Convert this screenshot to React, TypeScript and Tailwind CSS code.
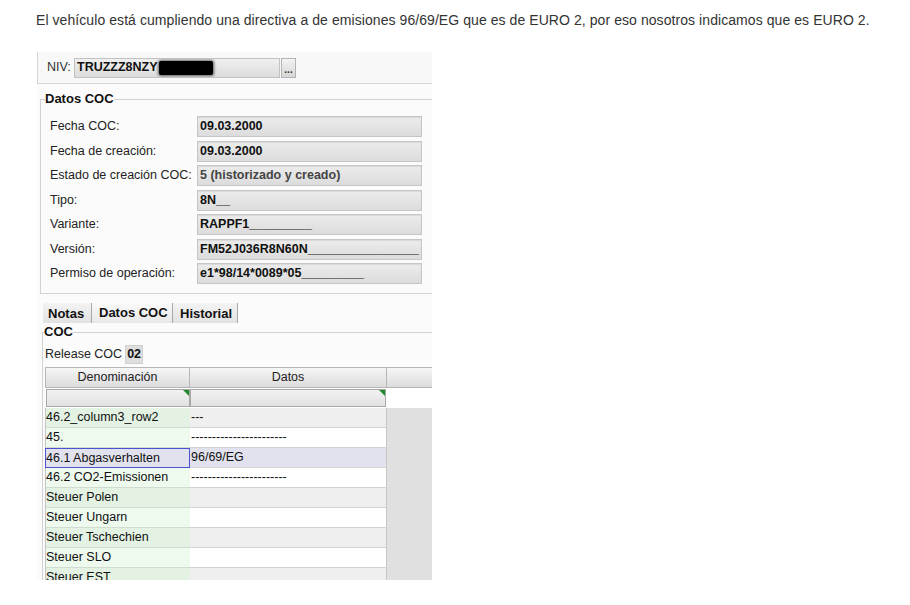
const fields: [string, string, boolean?][] = [
  ['Fecha COC:', '09.03.2000'],
  ['Fecha de creación:', '09.03.2000'],
  ['Estado de creación COC:', '5 (historizado y creado)', true],
  ['Tipo:', '8N__'],
  ['Variante:', 'RAPPF1_________'],
  ['Versión:', 'FM52J036R8N60N________________'],
  ['Permiso de operación:', 'e1*98/14*0089*05_________'],
]

const rows: [string, string][] = [
  ['46.2_column3_row2', '---'],
  ['45.', '-----------------------'],
  ['46.1 Abgasverhalten', '96/69/EG'],
  ['46.2 CO2-Emissionen', '-----------------------'],
  ['Steuer Polen', ''],
  ['Steuer Ungarn', ''],
  ['Steuer Tschechien', ''],
  ['Steuer SLO', ''],
  ['Steuer EST', ''],
]

function FilterBox() {
  return (
    <div className="relative h-full border border-[#a8a8a8] bg-linear-to-b from-[#f2f2f2] to-[#e2e2e2]">
      <span className="absolute right-0 top-0 w-0 h-0 border-l-[6px] border-l-transparent border-t-[6px] border-t-[#1f8a2c]" />
    </div>
  )
}

export default function App() {
  return (
    <div className="w-[910px] h-[605px] bg-white overflow-hidden font-['Liberation_Sans',Arial,sans-serif]">
      {/* Intro sentence */}
      <p className="pt-[12px] pl-[36px] text-[14px] leading-[16px] tracking-[0.07px] text-[#333]">
        El vehículo está cumpliendo una directiva a de emisiones 96/69/EG que es de EURO 2, por eso nosotros indicamos que es EURO 2.
      </p>

      {/* Screenshot of the application */}
      <div className="mt-[24px] ml-[37px] w-[395px] h-[528px] overflow-hidden bg-[#fbfbfb] text-[12.5px] text-[#222]">
        {/* NIV */}
        <div className="h-[32px] border-l border-b border-[#d6d6d6] bg-[#f8f8f8] flex items-center pl-[9px]">
          <span className="text-[#333] w-[27px]">NIV:</span>
          <div className="w-[206px] h-[20px] border border-[#c2c2c2] bg-linear-to-b from-[#f0f0f0] to-[#dcdcdc] flex items-center pl-[2px] font-bold text-[#111] overflow-hidden">
            TRUZZZ8NZY
            <span className="ml-[1px] w-[54px] h-[14px] bg-black rounded-[2px] shadow-[0_0_3px_1px_rgba(0,0,0,0.6)]" />
          </div>
          <div className="ml-[1px] w-[15px] h-[20px] border border-[#b4b4b4] bg-linear-to-b from-[#f4f4f4] to-[#d6d6d6] flex items-end justify-center pb-[3px] text-[10px] leading-[8px] font-bold text-[#333]">
            ...
          </div>
        </div>

        {/* Datos COC */}
        <fieldset className="mt-[7px] ml-[3px] border-t border-l border-b border-[#d2d2d2] pl-[9px] pt-[9px] pb-[9px]">
          <legend className="-ml-[5px] font-bold text-[13px] leading-[16px] text-[#111]">Datos COC</legend>
          <div className="flex flex-col gap-[3.5px]">
            {fields.map(([label, value, grey]) => (
              <div key={label} className="flex items-center h-[21px]">
                <span className="w-[147px] whitespace-nowrap text-[#222]">{label}</span>
                <div
                  className={`w-[225px] h-[21px] border border-[#c6c6c6] bg-linear-to-b from-[#ececec] to-[#dcdcdc] shadow-[inset_0_1px_1px_rgba(0,0,0,0.08)] flex items-center pl-[2px] font-bold whitespace-nowrap overflow-hidden ${grey ? 'text-[#444]' : 'text-[#111]'}`}
                >
                  {value}
                </div>
              </div>
            ))}
          </div>
        </fieldset>

        {/* Tabs */}
        <div className="mt-[9px] ml-[6px] flex h-[20px] text-[13px] font-bold text-[#111]">
          <div className="w-[49px] flex items-center pl-[5px] pt-[2px] bg-linear-to-b from-[#f3f3f3] to-[#e2e2e2] border-r border-[#a8a8a8]">Notas</div>
          <div className="w-[81px] flex items-center pl-[7px] bg-linear-to-b from-[#fafafa] to-[#e8e8e8] border-r border-[#a8a8a8]">Datos COC</div>
          <div className="w-[65px] flex items-center pl-[7px] pt-[2px] bg-linear-to-b from-[#f3f3f3] to-[#e2e2e2] border-r border-[#a8a8a8]">Historial</div>
        </div>

        {/* COC */}
        <fieldset className="mt-[2px] ml-[5px] border-t border-l border-[#d2d2d2] pl-[2px]">
          <legend className="-ml-[1px] font-bold text-[13px] leading-[14px] text-[#111]">COC</legend>
          <div className="mt-[6px] h-[19px] flex items-center">
            <span className="text-[#222]">Release COC</span>
            <span className="ml-[3px] w-[18px] h-[19px] bg-[#dedede] border border-[#d0d0d0] flex items-center justify-center font-bold text-[#111]">02</span>
          </div>

          {/* Table */}
          <div className="mt-[3px] grid grid-cols-[145px_197px_1fr]">
            {/* header */}
            <div className="h-[21px] border border-[#b6b6b6] bg-linear-to-b from-[#f6f6f6] to-[#dcdcdc] flex items-center justify-center text-[#222]">Denominación</div>
            <div className="h-[21px] border-y border-r border-[#b6b6b6] bg-linear-to-b from-[#f6f6f6] to-[#dcdcdc] flex items-center justify-center text-[#222]">Datos</div>
            <div className="h-[21px] border-y border-[#b6b6b6] bg-linear-to-b from-[#f6f6f6] to-[#dcdcdc]" />

            {/* filter row */}
            <div className="h-[20px] pl-[1px] py-[1px] bg-white"><FilterBox /></div>
            <div className="h-[20px] py-[1px] pr-[1px] bg-white"><FilterBox /></div>
            <div className="h-[20px] bg-white" />

            {/* data */}
            {rows.map(([name, data], i) => {
              const sel = i === 2
              const even = i % 2 === 0
              const first = sel
                ? 'border border-[#4a52d0] bg-[#e2e2ee]'
                : `border-l border-b border-l-[#c4c4c4] border-b-[#cfdccf] ${even ? 'bg-[#e3f2e3]' : 'bg-[#eefaee]'}`
              return [
                <div
                  key={name + 'a'}
                  className={`h-[20px] flex items-center pl-0 whitespace-nowrap text-[#111] ${first}`}
                >
                  {name}
                </div>,
                <div
                  key={name + 'b'}
                  className={`h-[20px] flex items-center pl-[1px] whitespace-nowrap text-[#111] border-b border-b-[#d2d2d2] border-r border-r-[#c8c8c8] overflow-hidden ${
                    sel ? 'bg-[#e2e2ee]' : even ? 'bg-[#efefef]' : 'bg-white'
                  }`}
                >
                  {data}
                </div>,
                <div key={name + 'c'} className="h-[20px] bg-[#e0e0e0]" />,
              ]
            })}
          </div>
        </fieldset>
      </div>
    </div>
  )
}
